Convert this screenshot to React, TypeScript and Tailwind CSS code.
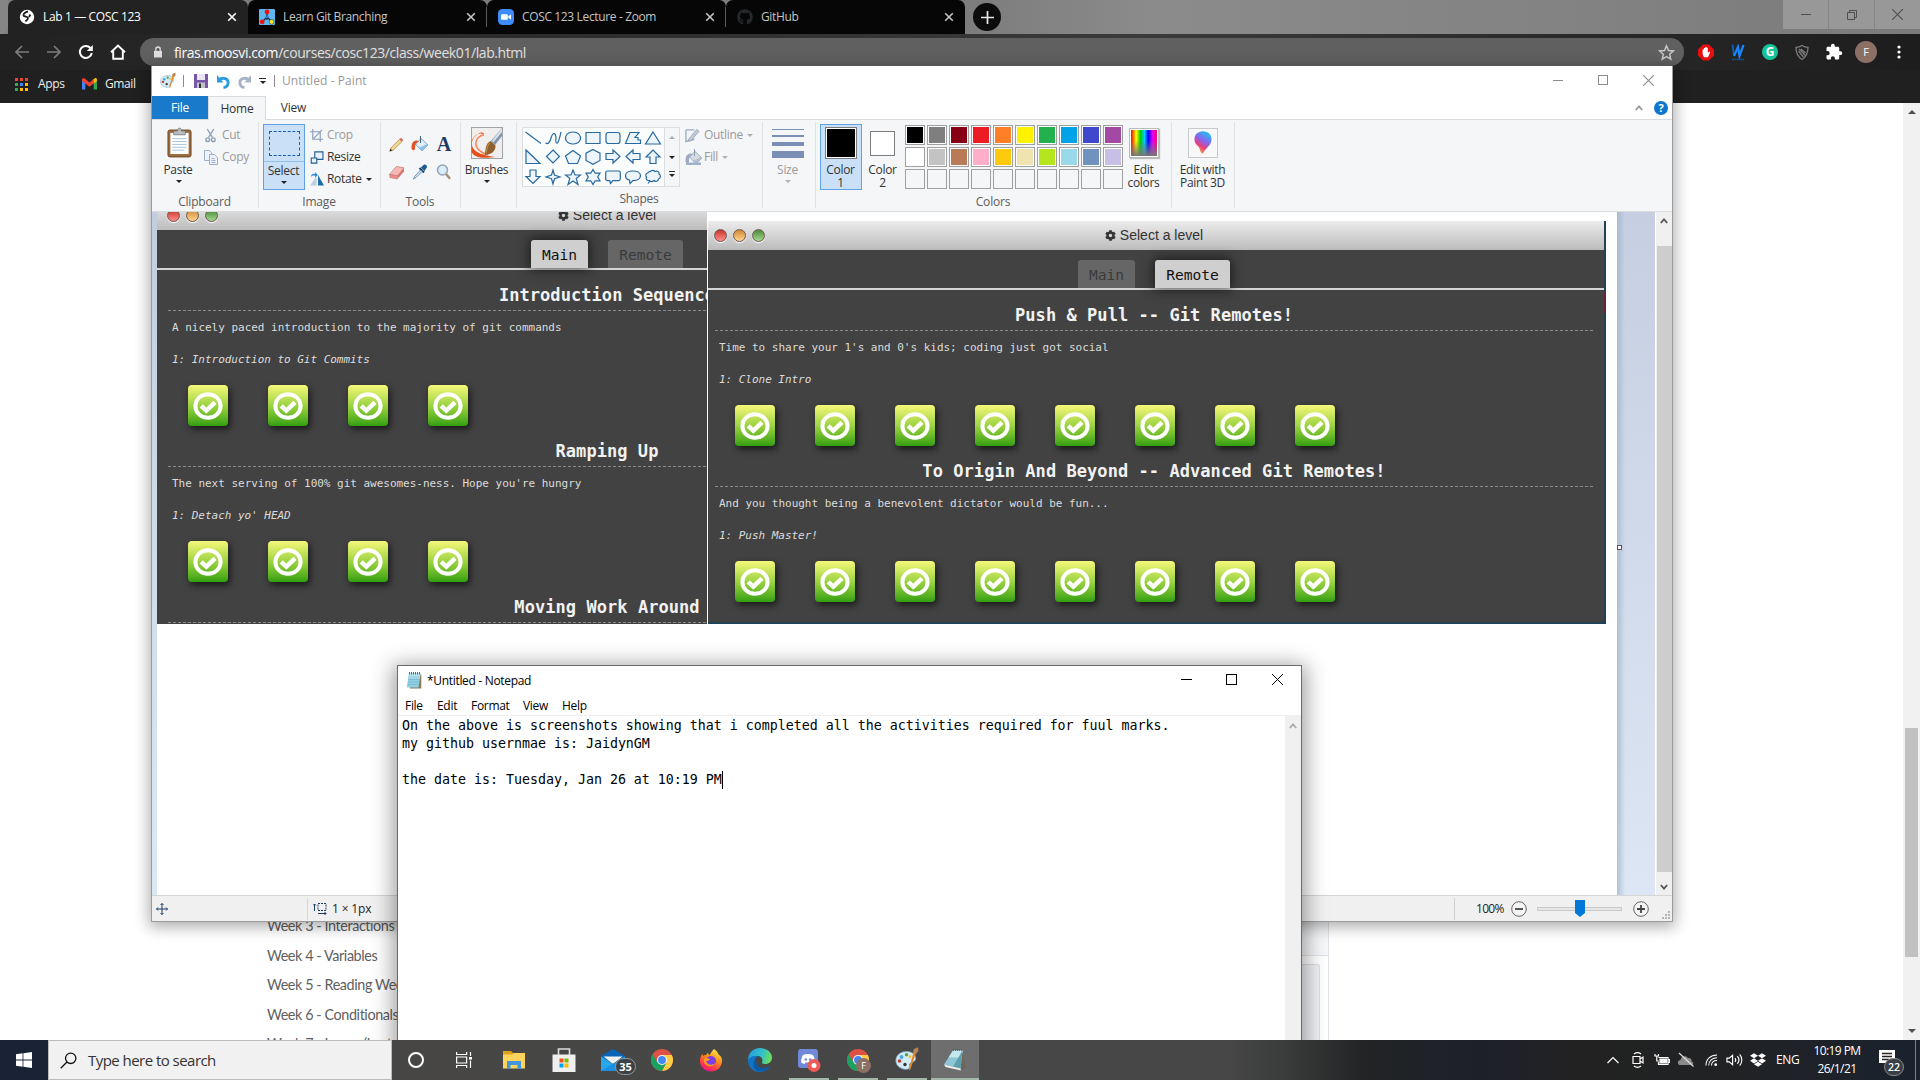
import React from "react";
import { FaGithub, FaCog, FaDropbox } from "react-icons/fa";
import { MdExtension } from "react-icons/md";

const UI = "font-['Open_Sans','Noto_Sans',sans-serif]";

/* ---------- Browser ---------- */

function Cross({ className = "" }: { className?: string }) {
  return (
    <svg viewBox="0 0 10 10" className={`h-[10px] w-[10px] shrink-0 ${className}`} fill="none" stroke="currentColor" strokeWidth="1.6">
      <path d="M1.2 1.2 8.8 8.8M8.8 1.2 1.2 8.8" />
    </svg>
  );
}

function GlobeIcon() {
  return (
    <svg viewBox="0 0 16 16" className="h-4 w-4">
      <circle cx="8" cy="8" r="7.2" fill="#fff" />
      <path d="M9 2.500C6.500 3 4 4.500 4.500 6.500c.8 1.500 4 .8 4.500 2.500.3 1.500-1.500 2-2.500 3.500M11.500 5.500 10 8" fill="none" stroke="#222" strokeWidth="1.800" />
    </svg>
  );
}

function GitTreeIcon() {
  return (
    <svg viewBox="0 0 16 16" className="h-4 w-4">
      <rect width="16" height="16" rx="1" fill="#5cb8ee" />
      <path d="M8 4v4M8 8 3.5 12.5M8 8l4.5 4.5M8 6v5" stroke="#123" strokeWidth="1.2" />
      <circle cx="8" cy="3" r="2.4" fill="#e11" />
      <circle cx="3.2" cy="12.8" r="2.4" fill="#e11" />
      <circle cx="12.6" cy="12.8" r="2.4" fill="#f6e82a" stroke="#222" strokeWidth=".5" />
      <circle cx="8" cy="8" r="1.6" fill="#3a6fd0" />
    </svg>
  );
}

function ZoomIcon() {
  return (
    <svg viewBox="0 0 16 16" className="h-4 w-4">
      <rect width="16" height="16" rx="4.5" fill="#3f8cff" />
      <rect x="3" y="5.2" width="6.8" height="5.6" rx="1.2" fill="#fff" />
      <path d="M10.3 7.3 13 5.4v5.2l-2.7-1.9z" fill="#fff" />
    </svg>
  );
}

function Tab({ icon, title, active = false, width, divider = false }: { icon: React.ReactNode; title: string; active?: boolean; width: string; divider?: boolean }) {
  return (
    <div className={`flex h-[34px] items-center rounded-t-[7px] ${width} ${active ? "bg-[#222] text-white" : "bg-[#060606] text-[#c4c4c4]"}`}>
      <div className="flex w-[35px] items-center justify-center pl-[3px]">{icon}</div>
      <span className="flex-1 whitespace-nowrap text-[12px] leading-[16px] tracking-[-0.36px]">{title}</span>
      <Cross className="mr-[10px]" />
      <div className={`h-[20px] w-px ${divider ? "bg-[#5a5a5a]" : "bg-transparent"}`} />
    </div>
  );
}

function Chrome() {
  return (
    <div className="relative h-[103px] w-full overflow-hidden bg-[#202020]">
      <div className="flex h-[34px] bg-gradient-to-r from-[#7c7c7c] from-50% via-[#8b8b8b] via-60% to-[#7b7b7b]">
        <div className="w-[8px] shrink-0 rounded-br-[6px] bg-[#858585]" />
        <Tab width="w-[240px]" active icon={<GlobeIcon />} title="Lab 1 — COSC 123" />
        <Tab width="w-[239px]" divider icon={<GitTreeIcon />} title="Learn Git Branching" />
        <Tab width="w-[239px]" divider icon={<ZoomIcon />} title="COSC 123 Lecture - Zoom" />
        <Tab width="w-[239px]" icon={<FaGithub className="h-4 w-4 text-[#24292e]" />} title="GitHub" />
        <div className="ml-[8px] mt-[3px] flex h-[28px] w-[28px] items-center justify-center rounded-full bg-[#0c0c0c]">
          <svg viewBox="0 0 12 12" className="h-[13px] w-[13px]" stroke="#e8e8e8" strokeWidth="1.6"><path d="M6 0v12M0 6h12" /></svg>
        </div>
        <div className="flex-1" />
        <div className="flex h-[29px] gap-px bg-[#868686] text-[#4f4f4f]">
          <div className="flex w-[45px] items-center justify-center bg-[#989898]"><div className="h-px w-[10px] bg-current" /></div>
          <div className="flex w-[45px] items-center justify-center bg-[#989898]">
            <svg viewBox="0 0 10 10" className="h-[10px] w-[10px]" fill="none" stroke="currentColor"><path d="M.5 2.5h7v7h-7zM2.5 2.5v-2h7v7h-2" /></svg>
          </div>
          <div className="flex w-[45px] items-center justify-center bg-[#989898]">
            <svg viewBox="0 0 10 10" className="h-[11px] w-[11px]" fill="none" stroke="currentColor"><path d="M0 0 10 10M10 0 0 10" /></svg>
          </div>
        </div>
      </div>
      <div className="flex h-[36px] items-center bg-gradient-to-r from-[#222] via-[#3a3a3a] via-60% to-[#1d1d1d]">
        <div className="flex w-[140px] items-center gap-[16px] pl-[14px]">
          <svg viewBox="0 0 16 16" className="h-4 w-4 shrink-0" fill="none" stroke="#7d7d7d" strokeWidth="1.7"><path d="M15 8H2M8 2 2 8l6 6" /></svg>
          <svg viewBox="0 0 16 16" className="h-4 w-4 shrink-0" fill="none" stroke="#7d7d7d" strokeWidth="1.7"><path d="M1 8h13M8 2l6 6-6 6" /></svg>
          <svg viewBox="0 0 16 16" className="h-4 w-4 shrink-0" fill="none" stroke="#fff" strokeWidth="2"><path d="M13.8 9A6 6 0 1 1 12.4 4" /><path d="M14.8 1v6H8.8z" fill="#fff" stroke="none" /></svg>
          <svg viewBox="0 0 16 16" className="h-4 w-4 shrink-0" fill="none" stroke="#fff" strokeWidth="1.9"><path d="M1 8.2 8 1.5l7 6.7M3.2 7v7.8h9.6V7" /></svg>
        </div>
        <div className="flex h-[28px] w-[1544px] items-center rounded-full bg-[#606060] pl-[13px] pr-[9px]">
          <svg viewBox="0 0 10 12" className="h-[12px] w-[10px]"><path d="M1 5h8v6.5H1z" fill="#e0e0e0" /><path d="M2.8 5V3.2a2.2 2.2 0 0 1 4.4 0V5" fill="none" stroke="#e0e0e0" strokeWidth="1.3" /></svg>
          <span className="ml-[11px] flex-1 text-[14px] tracking-[-0.42px] text-[#e2e2e2]"><span className="text-white">firas.moosvi.com</span>/courses/cosc123/class/week01/lab.html</span>
          <svg viewBox="0 0 24 24" className="h-[17px] w-[17px]" fill="none" stroke="#c8c8c8" strokeWidth="2"><path d="m12 2.5 2.8 6.7 7 .6-5.3 4.7 1.6 7L12 17.8l-6.1 3.7 1.6-7L2.2 9.800l7-.6z" /></svg>
        </div>
        <div className="ml-[14px] flex items-center">
          <svg viewBox="0 0 16 16" className="mr-[16px] h-[17px] w-[16px]"><path d="M5 0h6l5 5v6l-5 5H5l-5-5V5z" fill="#e60f0f" /><path d="M4.6 8V5h1.300v2.500-4h1.300v3.500-4.500h1.300v4.500-3.800h1.300v5l1.600-1.200.8.8L10 12.800H6.500C5.200 12 4.600 10.500 4.600 8z" fill="#fff" /></svg>
          <svg viewBox="0 0 16 17" className="mr-[16px] h-[17px] w-[16px]" fill="none"><path d="M2.500.5 4 12" stroke="#0f5fc0" strokeWidth="1.800" /><path d="M4 12 8 3l1.500 9L13.500 1" stroke="#1a86ff" strokeWidth="2.200" /><path d="M2 15.500h12" stroke="#0d4f92" strokeDasharray="2 .6" strokeWidth="1.500" /></svg>
          <span className="mr-[16px] flex h-[16px] w-[16px] items-center justify-center rounded-full bg-[#15c39a] text-[12px] font-bold text-white">G</span>
          <svg viewBox="0 0 16 16" className="mr-[15px] h-[17px] w-[16px]" fill="none" stroke="#7c7c7c" strokeWidth="1.3"><path d="M8 1c2 1.300 4 1.800 6 1.800 0 6-1.500 9.500-6 12.200C3.500 12.300 2 8.800 2 2.800 4 2.800 6 2.300 8 1z" /><path d="M5 4.500 11.500 11M4.500 6.500l5 6M7 4.500l4.500 4" /></svg>
          <MdExtension className="mr-[12px] h-[18px] w-[18px] text-white" />
          <span className="mr-[20px] flex h-[22px] w-[22px] items-center justify-center rounded-full bg-[#8c7066] text-[11px] text-white">F</span>
          <svg viewBox="0 0 4 14" className="h-[14px] w-[4px]" fill="#fff"><circle cx="2" cy="2" r="1.600" /><circle cx="2" cy="7" r="1.600" /><circle cx="2" cy="12" r="1.600" /></svg>
        </div>
      </div>
      <div className="flex h-[33px] items-center pb-[5px] pl-[15px] text-[12px] text-[#eee]">
        <div className="grid grid-cols-3 gap-[2px]">
          {["bg-[#ea4335]", "bg-[#ea4335]", "bg-[#ea4335]", "bg-[#34a853]", "bg-[#4285f4]", "bg-[#fbbc05]", "bg-[#34a853]", "bg-[#fbbc05]", "bg-[#fbbc05]"].map((c, i) => (
            <div key={i} className={`h-[3px] w-[3px] ${c}`} />
          ))}
        </div>
        <span className="ml-[10px] w-[44px] tracking-[-0.3px]">Apps</span>
        <svg viewBox="0 0 15 12" className="h-[12px] w-[15px]"><path d="M0 1.500v10h3.300V5z" fill="#4285f4" /><path d="M15 1.500v10h-3.300V5z" fill="#34a853" /><path d="M0 1.500C0 0 1.800-.2 2.800.6L7.500 4.400 12.200.6v4.500L7.500 8.800 0 3z" fill="#ea4335" /><path d="M11.700 1 13 .2c1-.4 2 .3 2 1.500V3l-3.300 2.500z" fill="#fbbc05" /></svg>
        <span className="ml-[8px] tracking-[-0.4px]">Gmail</span>
      </div>
    </div>
  );
}

function CoursePage() {
  return (
    <div className="flex h-[937px] w-full bg-white">
      <div className="flex w-[1301px] flex-col pl-[267px] pt-[808px] font-['Lato',sans-serif] text-[14.4px] leading-[29.5px] tracking-[-0.42px] text-[#5f5f5f]">
        {["Week 3 - Interactions", "Week 4 - Variables", "Week 5 - Reading Week", "Week 6 - Conditionals", "Week 7 - Loops (Lecture) Video"].map((t) => (
          <div key={t} className="h-[29.6px] shrink-0 whitespace-nowrap">{t}</div>
        ))}
      </div>
      <div className="flex w-[28px] flex-col border-r border-[#dfe2e6] pt-[807px]">
        <div className="h-[46px] shrink-0 border-b border-[#dfe2e6] bg-[#f6f7f9]" />
        <div className="mr-[8px] mt-[8px] flex-1 rounded-tr-[3px] border-r border-t border-[#dcdfe3] bg-[#f1f2f5]" />
      </div>
      <div className="flex-1" />
      <div className="flex w-[17px] flex-col items-center bg-[#f1f1f1]">
        <div className="mt-[7px] h-0 w-0 border-x-[4px] border-b-[4px] border-x-transparent border-b-[#505050]" />
        <div className="mt-[614px] h-[229px] w-[13px] bg-[#c1c1c1]" />
        <div className="mt-[72px] h-0 w-0 border-x-[4px] border-t-[4px] border-x-transparent border-t-[#505050]" />
      </div>
    </div>
  );
}

/* ---------- Git level panels pasted on the canvas ---------- */

function CheckTile() {
  return (
    <div className="flex h-[41px] w-[40px] items-center justify-center rounded-[4px] bg-gradient-to-b from-[#f6f878] via-[#93cf3c] via-55% to-[#2f9f10] shadow-[2px_3px_7px_rgba(0,0,0,0.65)]">
      <svg viewBox="0 0 30 28" className="h-[28px] w-[30px]" fill="none" stroke="#fff">
        <ellipse cx="15" cy="14" rx="12.600" ry="11.800" strokeWidth="4" />
        <path d="M8.200 13.800 13.300 18.700 22 10.300" strokeWidth="4.400" />
      </svg>
    </div>
  );
}

function Light({ color }: { color: string }) {
  return <div className={`h-[13px] w-[13px] rounded-full border border-[#6d5a55] shadow-[0_1px_1px_#fff] ${color}`} />;
}

type Section = { title: string; text?: string; level?: string };

function LevelPanel({ active, sections, count }: { active: "Main" | "Remote"; sections: Section[]; count: number }) {
  return (
    <div className="w-[900px] shrink-0 bg-[#424242] font-['DejaVu_Sans_Mono',monospace]">
      <div className="flex h-[29px] items-center bg-gradient-to-b from-[#ececec] to-[#bcbcbc] font-['Liberation_Sans',Arial,sans-serif] text-[14px] text-[#333]">
        <div className="flex w-[76px] gap-[6px] pl-[10px]">
          <Light color="bg-gradient-to-b from-[#c9302c] to-[#ff8c87]" />
          <Light color="bg-gradient-to-b from-[#d08a30] to-[#ffd38c]" />
          <Light color="bg-gradient-to-b from-[#4c8b36] to-[#a3d88f]" />
        </div>
        <div className="flex flex-1 items-center justify-center gap-[4px] pr-[76px]">
          <FaCog className="h-[11px] w-[11px]" />
          <span>Select a level</span>
        </div>
      </div>
      <div className="flex h-[40px] items-end justify-center gap-[20px] border-b-2 border-[#d2d5d3] text-[14.6px]">
        {(["Main", "Remote"] as const).map((t) => (
          <div key={t} className={`flex h-[28px] items-center justify-center rounded-t-[3px] pt-[2px] ${t === "Main" ? "w-[57px]" : "w-[75px]"} ${t === active ? "bg-[#cfcfcf] text-[#111] shadow-[0_0_12px_2px_rgba(0,0,0,0.55)]" : "bg-[#666] text-[#3a3a3a]"}`}>{t}</div>
        ))}
      </div>
      {sections.map((s) => (
        <div key={s.title} className="h-[156px] pt-[10px]">
          <div className="mx-[11px] flex h-[31px] items-center justify-center border-b border-dashed border-[#8a8a8a] pt-[2px] text-[17px] font-bold tracking-[0.06px] text-[#f2f2f2]">{s.title}</div>
          {s.text && (
            <>
              <div className="flex h-[32px] items-center pl-[15px] pt-[2px] text-[11px] tracking-[-0.02px] text-[#dcdcdc]">{s.text}</div>
              <div className="flex h-[32px] items-center pl-[15px] pt-[2px] text-[11px] italic tracking-[-0.03px] text-[#dcdcdc]">{s.level}</div>
              <div className="flex gap-[40px] pl-[31px] pt-[10px]">
                {Array.from({ length: count }, (_, i) => <CheckTile key={i} />)}
              </div>
            </>
          )}
        </div>
      ))}
    </div>
  );
}

/* ---------- Paint ---------- */

function Down({ dim = false }: { dim?: boolean }) {
  return <div className={`h-0 w-0 shrink-0 border-x-[3px] border-t-[3px] border-x-transparent ${dim ? "border-t-[#b0b0b0]" : "border-t-[#222]"}`} />;
}

function Group({ label, width, children }: { label: string; width: string; children: React.ReactNode }) {
  return (
    <div className={`mt-[2px] flex h-[86px] shrink-0 flex-col border-r border-[#e0e2e4] ${width}`}>
      <div className="flex h-[70px] pt-[2px]">{children}</div>
      <div className="pr-[1px] pt-[2px] text-center text-[12px] leading-[19px] tracking-[-0.2px] text-[#5c5c5c]">{label}</div>
    </div>
  );
}

function BigButton({ icon, label, arrow, second, className }: { icon: React.ReactNode; label: string; arrow?: "on" | "dim"; second?: string; className: string }) {
  return (
    <div className={`flex h-[66px] shrink-0 flex-col items-center ${className}`}>
      <div className="flex h-[37px] items-center justify-center">{icon}</div>
      <div className="mt-[2px] whitespace-nowrap pr-[1px] text-[12px] leading-[13px] tracking-[-0.3px]">{label}</div>
      {second && <div className="whitespace-nowrap pr-[1px] text-[12px] leading-[13px] tracking-[-0.3px]">{second}</div>}
      {arrow && <div className="mt-[4px]"><Down dim={arrow === "dim"} /></div>}
    </div>
  );
}

function Row({ icon, label, dim = false, arrow = false }: { icon: React.ReactNode; label: string; dim?: boolean; arrow?: boolean }) {
  return (
    <div className={`flex h-[22px] items-center text-[12px] tracking-[-0.3px] ${dim ? "text-[#9a9a9a]" : "text-[#333]"}`}>
      <div className="flex w-[19px] items-center">{icon}</div>
      <span>{label}</span>
      {arrow && <div className="ml-[4px]"><Down dim={dim} /></div>}
    </div>
  );
}

const shapes = [
  "M1.500 3 17 14.500",
  "M1.500 14C4 16 6 13 7 9s3-6 4.500-3-1 7 1 8S16 7 17 3",
  "M9 3a7.500 6 0 1 0 .01 0z",
  "M2 3.500h14v11H2z",
  "M4.500 3.500h9a2.500 2.500 0 0 1 2.500 2.500v6a2.500 2.500 0 0 1-2.500 2.500h-9A2.500 2.500 0 0 1 2 12V6a2.500 2.500 0 0 1 2.500-2.500z",
  "M1.500 14.500 6 3.500h9l-4 5h3v2.500h2.500v3.500z",
  "M9 3 16.500 15h-15z",
  "M2 2v13.500h14z",
  "M9 2l6.500 6.500L9 15 2.500 8.500z",
  "M9 2.500l7.500 5.500L13.500 15.500h-9L1.500 8z",
  "M9 1.500l7 3.700v7.300l-7 3.700-7-3.700V5.200z",
  "M2 5.500h7V2l7 6.500-7 6.500v-3.500H2z",
  "M16 5.500H9V2L2 8.500l7 6.500v-3.500h7z",
  "M6 15.500V9H2l7-7 7 7h-4v6.500z",
  "M6 2v6.500H2l7 7 7-7h-4V2z",
  "M9 2l1.500 5L16 9l-5.500 1.800L9 16l-1.500-5.200L2 9l5.500-2z",
  "M9 2l2 5h5.500l-4.300 3.500L14 16.500 9 13 4 16.500l1.800-6L1.500 7H7z",
  "M9 1.500l2.200 3.700h4.800L13.700 9l2.300 3.800h-4.800L9 16.500l-2.200-3.700H2L4.300 9 2 5.200h4.800z",
  "M3.500 3h11a1.800 1.800 0 0 1 1.800 1.800v6a1.800 1.800 0 0 1-1.800 1.800H9L6.500 15.500l-.8-2.900H3.500a1.800 1.800 0 0 1-1.800-1.800v-6A1.800 1.800 0 0 1 3.500 3z",
  "M9 3c4.500 0 7.500 2 7.500 4.800S13.500 12.600 9 12.600L6 15.500l-.5-3.300C3 11.500 1.500 9.800 1.500 7.800 1.500 5 4.500 3 9 3z",
  "M6 3.800c1.200-2 4-1.800 5-.3 2-1 4.500.3 4 2.500 2 1 2 4-.5 5 0 2.500-3 3-4.500 1.500-1.500 1.500-4 1.300-4.500 0-2.500.5-4-1.500-3-3.500-1.500-1.500-.5-4 1.300-4C4 4 5 3.500 6 3.800zM6 13l-2 2.500",
];

const palette = [
  ["bg-[#000000]", "bg-[#7f7f7f]", "bg-[#880015]", "bg-[#ed1c24]", "bg-[#ff7f27]", "bg-[#fff200]", "bg-[#22b14c]", "bg-[#00a2e8]", "bg-[#3f48cc]", "bg-[#a349a4]"],
  ["bg-[#ffffff]", "bg-[#c3c3c3]", "bg-[#b97a57]", "bg-[#ffaec9]", "bg-[#ffc90e]", "bg-[#efe4b0]", "bg-[#b5e61d]", "bg-[#99d9ea]", "bg-[#7092be]", "bg-[#c8bfe7]"],
];

function PaletteGlyph({ className }: { className: string }) {
  return (
    <svg viewBox="0 0 24 24" className={className}>
      <path d="M1 15C0 9 5 4.500 11.500 4.500s10 4 9 8c-.8 3-4 2-5.500 4s1 3-1 5S2 22 1 15z" fill="#d3eaf7" stroke="#7ea8c4" strokeWidth=".8" />
      <circle cx="6.500" cy="10" r="1.900" fill="#4aa5e0" /><circle cx="11.500" cy="7.800" r="1.700" fill="#48a43f" /><circle cx="4.500" cy="14" r="1.800" fill="#c0392b" /><circle cx="10" cy="17.500" r="1.700" fill="#333" /><circle cx="15" cy="9.500" r="1.500" fill="#e9c53a" />
      <path d="M21 6 15.500 22l-1.500 1.500.3-2.500L18.500 5z" fill="#e58a2c" /><path d="M18.500 5.500C17.500 3 19 1 23 .5c1 2.500 0 5-2 6.300z" fill="#b98252" />
    </svg>
  );
}

function Bucket({ dim = false }: { dim?: boolean }) {
  return (
    <svg viewBox="0 0 18 16" className="h-[16px] w-[18px]">
      <path d="M10 2.500 17 9 11 15 4.500 8z" fill={dim ? "#d6dbe4" : "#e2eff8"} stroke={dim ? "#a3aec0" : "#7ba6c8"} />
      <path d="M17 9 11 15 8 11.800 16 8z" fill={dim ? "#b5bfd0" : "#8fc3e6"} />
      <path d="M9.500 0v7" stroke={dim ? "#8f9bb0" : "#4a6076"} />
      <path d="M.5 12.500C.5 6.500 2.500 4.500 6 4.500l2 1C5 6.500 4 8.500 4 13c-1 2-2.500 1.500-3.500-.5z" fill={dim ? "#9fabc0" : "#e0542a"} />
      {dim && <path d="M1 13.500h15V16H1z" fill="#9fb0cb" />}
    </svg>
  );
}

function Ribbon() {
  return (
    <div className="flex h-[93px] border-b border-t border-[#dadbdc] bg-[#f5f6f7] text-[#333]">
      <Group label="Clipboard" width="w-[107px]">
        <BigButton className="ml-[7px] w-[39px]" label="Paste" arrow="on" icon={
          <svg viewBox="0 0 26 32" className="ml-[1px] h-[31px] w-[25px]"><rect x="1" y="3" width="24" height="28" rx="2" fill="#9a6a3c" stroke="#6f4a26" /><rect x="3.500" y="6" width="19" height="22" fill="#fff" /><path d="M5.500 12h15M5.500 15h15M5.500 18h15M5.500 21h15M5.500 24h12" stroke="#a9c3d8" /><path d="M7 4h4c0-4 4-4 4 0h4v4H7z" fill="#b9bdc2" stroke="#6c7075" strokeWidth=".8" /></svg>
        } />
        <div className="ml-[5px] flex flex-col">
          <Row dim label="Cut" icon={<svg viewBox="0 0 14 16" className="ml-[1px] h-[15px] w-[13px]" fill="none" stroke="#8fa1bb" strokeWidth="1.500"><path d="M3.500 1 9 10M10.500 1 5 10" /><circle cx="4" cy="12.500" r="2" /><circle cx="10" cy="12.500" r="2" /></svg>} />
          <Row dim label="Copy" icon={<svg viewBox="0 0 16 16" className="h-[16px] w-[16px]" fill="#eef2f8" stroke="#9db0cc"><path d="M1.500 1.500h5l2 2v8h-7z" /><path d="M6.500 5.500h5l3 3v7h-8zM8.500 9.500h3M8.500 11.500h4M8.500 13.500h4" /></svg>} />
        </div>
      </Group>
      <Group label="Image" width="w-[122px]">
        <BigButton className="ml-[4px] w-[42px] border border-[#62a2e4] bg-[#c9e0f7]" label="Select" arrow="on" icon={
          <div className="flex h-full w-[40px] items-center justify-center border-b border-[#92bfec]"><div className="h-[25px] w-[31px] border border-dashed border-[#1a5fa5]" /></div>
        } />
        <div className="ml-[5px] flex flex-col [&>div>div:first-child]:w-[17px]">
          <Row dim label="Crop" icon={<svg viewBox="0 0 14 14" className="h-[13px] w-[13px]" fill="none" stroke="#8a9cb8" strokeWidth="1.200"><path d="M3 0v11h11M0 3h11v11M4 10 13 1" /></svg>} />
          <Row label="Resize" icon={<svg viewBox="0 0 14 14" className="h-[13px] w-[14px]" fill="#eaf3fb" stroke="#1f6091" strokeWidth="1.200"><path d="M4.600 1h8.800v8H4.600z" /><path d="M.8 7.500h6v5.500h-6z" /></svg>} />
          <Row arrow label="Rotate" icon={<svg viewBox="0 0 14 14" className="h-[14px] w-[14px]"><path d="M6.500 4v9.500H0z" fill="#b9cfe2" /><path d="M8 3v10.500h6z" fill="#1f6ca8" /><path d="M1 5C1 2 3 1.500 5 2V.3L8 3 5 5.500V3.800C3.500 3.300 2.500 3.500 1 5z" fill="#2d8fdc" /></svg>} />
        </div>
      </Group>
      <Group label="Tools" width="w-[80px]">
        <div className="grid h-[66px] w-full grid-cols-[24px_24px_24px] grid-rows-[28px_28px] place-items-center pl-[3px] pt-[6px]">
          <svg viewBox="0 0 16 16" className="h-[15px] w-[15px]"><path d="M1 15 2 11.800 11.300 2.300l2.600 2.500L4.500 14z" fill="#f3d98f" stroke="#a5854a" strokeWidth=".8" /><path d="M11 2.500 12.800.8 15.300 3.300l-1.600 1.800z" fill="#d4696a" /><path d="M.5 15.500l.9-3L3.800 14.500z" fill="#333" /></svg>
          <Bucket />
          <span className="font-['Liberation_Serif',serif] text-[20px] font-bold leading-none text-[#1f3b63]">A</span>
          <svg viewBox="0 0 18 16" className="h-[15px] w-[17px]"><path d="M1.500 10 9 1.500 17 3l-7 8.500z" fill="#f6b9b5" stroke="#b9746b" strokeWidth=".7" /><path d="M1.500 10l8.500 1.500V15L2 13.500z" fill="#ea9088" stroke="#b9746b" strokeWidth=".5" /><path d="M10 11.500 17 3v4l-7 8z" fill="#d87770" /></svg>
          <svg viewBox="0 0 16 16" className="h-[16px] w-[16px]"><path d="M9 3.500 11.500 1c2-1.500 4.500 1 3 3L12.500 7z" fill="#1f5a94" /><path d="M7.500 4 12 8.500" stroke="#173f68" strokeWidth="2" /><path d="M8.500 6 10 7.500 4 13.500l-2.500 1.500L2.500 12.500z" fill="#d6e8f5" stroke="#5e8bb0" strokeWidth=".9" /></svg>
          <svg viewBox="0 0 16 16" className="h-[16px] w-[16px]" fill="#dcecf8"><circle cx="6.500" cy="6" r="5" stroke="#8fa5b8" strokeWidth="1.500" /><path d="M10 10l4 4.800" stroke="#a98c70" strokeWidth="2.400" /></svg>
        </div>
      </Group>
      <Group label="" width="w-[56px]">
        <BigButton className="ml-[4px] w-[44px]" label="Brushes" arrow="on" icon={
          <svg viewBox="0 0 32 32" className="mt-[1px] h-[32px] w-[32px]">
            <rect x=".5" y=".5" width="31" height="31" fill="#f1efee" stroke="#a0a4a8" />
            <path d="M13 8c0-3-3-3-6-1-5 3-8 9-5 14 3 5 10 7 22 9-14 2-21 0-23.500-5V14C3 8 9 4 13 8z" fill="#e2521f" />
            <path d="M13 8C9 8 4 12 5 18c1 5 6 8 12 10" fill="none" stroke="#f4875a" strokeWidth="1.500" />
            <path d="M31 1v8L24 18l-4-4z" fill="#7f95a8" /><path d="M31 1 21 14l1.500 1.300L31 5z" fill="#d8e3ec" />
            <path d="M19.500 14l5 4.500c.5 6-5 9.500-11 9 1.500-4 .5-11 6-13.500z" fill="#91602f" /><path d="M19 16c-3 2-3 7-4 10" fill="none" stroke="#c08a4e" strokeWidth="1.200" />
          </svg>
        } />
      </Group>
      <Group label="Shapes" width="w-[246px]">
        <div className="ml-[5px] mt-[3px] flex h-[60px] w-[158px] border border-[#dcdddf] bg-[#fbfcfc]">
          <div className="grid grid-cols-7 grid-rows-3">
            {shapes.map((d, i) => (
              <svg key={i} viewBox="0 0 18 18" className="m-px h-[18px] w-[18px]" fill={i < 2 ? "none" : "#eef5fa"} stroke="#2769a0" strokeWidth="1.200"><path d={d} /></svg>
            ))}
          </div>
          <div className="ml-[1px] flex w-[15px] flex-col items-center border-l border-[#dcdddf] bg-[#f5f6f7]">
            <div className="mt-[8px] h-0 w-0 border-x-[3px] border-b-[3px] border-x-transparent border-b-[#aaa]" />
            <div className="mb-[12px] mt-[17px]"><Down /></div>
            <div className="mb-[2px] h-px w-[6px] shrink-0 bg-[#333]" />
            <Down />
          </div>
        </div>
        <div className="ml-[5px] flex flex-col">
          <Row dim arrow label="Outline" icon={<svg viewBox="0 0 16 16" className="h-[15px] w-[15px]"><path d="M1 2h9v0M1 2v12.500L10 12" fill="none" stroke="#9aa9c2" strokeWidth="1.400" /><path d="M3 13 12.500 1.500 15 3.500 6 14z" fill="#c0c9d8" stroke="#8f9db5" strokeWidth=".8" /></svg>} />
          <Row dim arrow label="Fill" icon={<Bucket dim />} />
        </div>
      </Group>
      <Group label="" width="w-[53px]">
        <BigButton className="ml-[4px] w-[42px] text-[#9a9a9a]" label="Size" arrow="dim" icon={
          <div className="flex flex-col gap-[5px] pt-[1px]"><div className="h-px w-[32px] bg-[#7a8fb3]" /><div className="h-[2px] w-[32px] bg-[#7a8fb3]" /><div className="h-[4px] w-[32px] bg-[#7a8fb3]" /><div className="h-[7px] w-[32px] bg-[#7a8fb3]" /></div>
        } />
      </Group>
      <Group label="Colors" width="w-[356px]">
        <BigButton className="ml-[4px] w-[42px] border border-[#62a2e4] bg-[#c9e0f7]" label="Color" second="1" icon={
          <div className="h-[32px] w-[32px] border border-[#7a7a7a] bg-white p-px"><div className="h-full w-full bg-black" /></div>
        } />
        <BigButton className="w-[42px]" label="Color" second="2" icon={<div className="mr-px mt-[1px] h-[25px] w-[25px] border border-[#7d7d7d] bg-white" />} />
        <div className="ml-[1px] mt-[1px] grid auto-rows-[20px] grid-cols-[repeat(10,20px)] gap-[2px]">
          {palette.flat().map((c) => (
            <div key={c} className="border border-[#a0a0a0] bg-white p-px"><div className={`h-full w-full ${c}`} /></div>
          ))}
          {Array.from({ length: 10 }, (_, i) => <div key={i} className="border border-[#a0a0a0] bg-[#f5f6f7]" />)}
        </div>
        <BigButton className="ml-0 w-[42px]" label="Edit" second="colors" icon={
          <div className="mt-[1px] h-[30px] w-[30px] border border-[#bbb] bg-white p-px shadow-[1px_1px_1px_#bbb]">
            <div className="h-full w-full bg-[linear-gradient(90deg,#f00,#ff0_20%,#0c0_36%,#0cf_52%,#00f_66%,#d0f_82%,#f06)]"><div className="h-full w-full bg-gradient-to-b from-transparent from-40% to-[#777]" /></div>
          </div>
        } />
      </Group>
      <Group label="" width="w-[63px]">
        <BigButton className="ml-[1px] w-[60px]" label="Edit with" second="Paint 3D" icon={
          <div className="mt-[1px] flex h-[30px] w-[30px] items-center justify-center border border-[#c9c9c9] bg-[#f8f8f8]">
            <svg viewBox="0 0 20 26" className="h-[24px] w-[18px]">
              <defs><linearGradient id="drop" x1=".8" y1="0" x2=".3" y2="1"><stop offset="0" stopColor="#15c8f0" /><stop offset=".45" stopColor="#8a63f0" /><stop offset=".7" stopColor="#e8407c" /><stop offset="1" stopColor="#f6b13a" /></linearGradient></defs>
              <path d="M10 0c6 0 9.500 4 9.500 9 0 7-8 10-9.500 16C6 24 7.500 19 4 16 2 14 .5 12 .5 9 .5 4 4 0 10 0z" fill="url(#drop)" />
            </svg>
          </div>
        } />
      </Group>
    </div>
  );
}

function PaintTitle() {
  return (
    <div className="flex h-[30px] items-center pl-[8px]">
      <PaletteGlyph className="-mt-[2px] h-[17px] w-[16px]" />
      <div className="ml-[7px] h-[12px] w-px bg-[#8a8a8a]" />
      <svg viewBox="0 0 14 14" className="ml-[10px] h-[14px] w-[14px]"><path d="M0 0h14v14H0z" fill="#7a56a8" /><path d="M3 0h8v6H3z" fill="#e9e6f2" /><path d="M3 8.500h8V14H3z" fill="#bfc3c9" /><path d="M5 9.500h2V14H5z" fill="#333" /></svg>
      <svg viewBox="0 0 14 14" className="ml-[9px] h-[15px] w-[13px]" fill="none"><path d="M2 5c5-3 10-1 10 3 0 3-2 5-5 5.500" stroke="#2c9be0" strokeWidth="3" /><path d="M0 0v8h7z" fill="#2c9be0" /></svg>
      <svg viewBox="0 0 14 14" className="ml-[8px] h-[15px] w-[13px]" fill="none"><path d="M12 5C7 2 2 4 2 8c0 3 2 5 5 5.500" stroke="#a7b3c4" strokeWidth="3" /><path d="M14 0v8H7z" fill="#a7b3c4" /></svg>
      <div className="ml-[8px] flex flex-col items-center gap-[2px]"><div className="h-px w-[7px] bg-[#222]" /><Down /></div>
      <div className="ml-[8px] h-[12px] w-px bg-[#8a8a8a]" />
      <span className="ml-[7px] flex-1 text-[12px] tracking-[0.08px] text-[#999]">Untitled - Paint</span>
      <div className="flex items-center pb-[2px] pr-[18px] text-[#8c8c8c]">
        <div className="h-px w-[10px] bg-current" />
        <div className="ml-[35px] h-[10px] w-[10px] border border-current" />
        <svg viewBox="0 0 10 10" className="ml-[35px] h-[11px] w-[11px]" stroke="currentColor"><path d="M0 0 10 10M10 0 0 10" /></svg>
      </div>
    </div>
  );
}

function Chevron({ down = false, className = "text-[#555]" }: { down?: boolean; className?: string }) {
  return <svg viewBox="0 0 8 6" className={`h-[6px] w-[8px] ${className}`} fill="none" stroke="currentColor" strokeWidth="1.800"><path d={down ? "M.8 1 4 4.600 7.200 1" : "M.8 5 4 1.400 7.200 5"} /></svg>;
}

function Paint() {
  return (
    <div className="absolute left-[151px] top-[66px] flex h-[856px] w-[1522px] flex-col border border-t-0 border-[#9b9b9b] bg-white shadow-[0_3px_14px_2px_rgba(0,0,0,0.32)]">
      <PaintTitle />
      <div className="flex h-[23px] text-[12px] leading-[23px] tracking-[-0.2px]">
        <div className="w-[56px] bg-[#1979ca] text-center text-white">File</div>
        <div className="relative z-10 -mb-px w-[58px] border-x border-t border-[#dadbdc] bg-[#f5f6f7] text-center text-[#333]">Home</div>
        <div className="w-[55px] text-center text-[#333]">View</div>
        <div className="flex flex-1 items-center justify-end gap-[11px] pr-[4px]">
          <Chevron className="text-[#999]" />
          <div className="flex h-[14px] w-[14px] items-center justify-center rounded-full bg-[#0f76cf] text-[11px] font-bold leading-none text-white">?</div>
        </div>
      </div>
      <Ribbon />
      <div className="flex min-h-0 flex-1">
        <div className="w-[5px] bg-gradient-to-b from-[#c2cde0] to-[#dde8f5]" />
        <div className="w-[1460px] overflow-hidden bg-white">
          <div className="flex h-[412px]">
            <div className="flex w-[550px] items-start overflow-hidden bg-[#424242]">
              <div className="-mt-[11px]">
                <LevelPanel active="Main" count={4} sections={[
                  { title: "Introduction Sequence", text: "A nicely paced introduction to the majority of git commands", level: "1: Introduction to Git Commits" },
                  { title: "Ramping Up", text: "The next serving of 100% git awesomes-ness. Hope you're hungry", level: "1: Detach yo' HEAD" },
                  { title: "Moving Work Around" },
                ]} />
              </div>
            </div>
            <div className="flex h-[412px] w-[899px] items-start overflow-hidden border-l border-t-[9px] border-white bg-[#1f4257]">
              <div className="-ml-[4px] h-[401px] overflow-hidden rounded-br-[4px]">
                <LevelPanel active="Remote" count={8} sections={[
                  { title: "Push & Pull -- Git Remotes!", text: "Time to share your 1's and 0's kids; coding just got social", level: "1: Clone Intro" },
                  { title: "To Origin And Beyond -- Advanced Git Remotes!", text: "And you thought being a benevolent dictator would be fun...", level: "1: Push Master!" },
                ]} />
                <div className="h-[20px] bg-[#424242]" />
              </div>
              <div className="mt-[71px] h-[21px] w-[2px] bg-[#6a1f3c]" />
            </div>
          </div>
        </div>
        <div className="flex w-[38px] items-start bg-gradient-to-b from-[#c5cfe1] to-[#dce6f4]">
          <div className="h-full w-[8px] bg-gradient-to-r from-[#9fb0c8]/70 to-transparent" />
          <div className="-ml-[8px] mt-[333px] h-[5px] w-[5px] border border-[#555] bg-white" />
        </div>
        <div className="flex w-[17px] flex-col items-center border-l border-white bg-[#f0f0f0]">
          <div className="flex h-[34px] items-center pb-[16px]"><Chevron /></div>
          <div className="w-[15px] flex-1 bg-[#cdcdcd]" />
          <div className="flex h-[23px] items-center pt-[6px]"><Chevron down /></div>
        </div>
      </div>
      <div className="flex h-[26px] items-center border-t border-[#d5d5d5] bg-[#f0f0f0] text-[12px] text-[#1c1c1c]">
        <div className="flex h-[22px] w-[156px] items-center border-r border-[#d8d8d8] pl-[4px]">
          <svg viewBox="0 0 12 12" className="h-[12px] w-[12px]" fill="none" stroke="#1c3d66"><path d="M6 .5v11M.5 6h11M4.500 2 6 .5 7.500 2M4.500 10 6 11.500 7.500 10M2 4.500.5 6 2 7.500M10 4.500 11.500 6 10 7.500" /></svg>
        </div>
        <svg viewBox="0 0 14 12" className="ml-[5px] h-[12px] w-[14px]" fill="none" stroke="#1c3d66"><path d="M1.500 1v7M0 2.500 1.500 1 3 2.500" /><path d="M5 .5h8v7H5z" strokeDasharray="2 1" /><path d="M5 10.500h8M11.500 9l1.500 1.500-1.500 1.500" /></svg>
        <span className="ml-[5px] flex-1 tracking-[-0.15px]">1 × 1px</span>
        <div className="flex h-[22px] w-[218px] items-center border-l border-[#d0d0d0] pl-[21px]">
          <span className="w-[35px] tracking-[-0.7px]">100%</span>
          <svg viewBox="0 0 16 16" className="h-[16px] w-[16px]"><circle cx="8" cy="8" r="7.300" fill="#f4f4f4" stroke="#666" /><path d="M4 8h8" stroke="#444" strokeWidth="1.800" /></svg>
          <div className="ml-[10px] flex h-[4px] w-[85px] items-center justify-center border border-[#c9c9c9] bg-[#e6e8e8]">
            <svg viewBox="0 0 10 17" className="h-[17px] w-[10px] shrink-0"><path d="M0 0h10v13l-5 4-5-4z" fill="#0078d7" /></svg>
          </div>
          <svg viewBox="0 0 16 16" className="ml-[11px] h-[16px] w-[16px]"><circle cx="8" cy="8" r="7.300" fill="#f4f4f4" stroke="#666" /><path d="M4 8h8M8 4v8" stroke="#444" strokeWidth="1.800" /></svg>
          <svg viewBox="0 0 9 9" className="ml-[13px] mt-[13px] h-[9px] w-[9px]" fill="#b5b5b5"><path d="M6 0h2v2H6zM3 3h2v2H3zM6 3h2v2H6zM0 6h2v2H0zM3 6h2v2H3zM6 6h2v2H6z" /></svg>
        </div>
      </div>
    </div>
  );
}

/* ---------- Notepad ---------- */

function NoteGlyph({ className }: { className: string }) {
  return (
    <svg viewBox="0 0 16 17" className={className}>
      <path d="M13 2.500h2.300V16.500H4v-1.500h8z" fill="#8a7a5c" />
      <path d="M3 1.500h11.500L12.500 15.500H.8z" fill="#8fd0e2" /><path d="M3 1.500h11.500L13.800 6.500H2.200z" fill="#b9e3ee" />
      <path d="M2.500 5h11M2.200 7.500h11M1.800 10h11M1.500 12.500h11" stroke="#6db4c9" strokeWidth=".6" />
      <path d="M3.500 0v2.500M5.500 0v2.500M7.500 0v2.500M9.500 0v2.500M11.500 0v2.500M13.500 0v2.500" stroke="#444" strokeWidth=".8" />
    </svg>
  );
}

function Notepad() {
  return (
    <div className="absolute left-[397px] top-[665px] flex h-[420px] w-[905px] flex-col border border-[#6b6b6b] bg-white shadow-[0_4px_20px_4px_rgba(0,0,0,0.38)]">
      <div className="flex h-[31px] items-center pb-[2px] pl-[8px]">
        <NoteGlyph className="h-[17px] w-[16px]" />
        <span className="ml-[5px] flex-1 text-[12px] tracking-[-0.32px] text-black">*Untitled - Notepad</span>
        <div className="flex items-center pb-[2px] pr-[18px] text-black">
          <div className="h-px w-[11px] bg-current" />
          <div className="ml-[34px] h-[11px] w-[11px] border border-current" />
          <svg viewBox="0 0 11 11" className="ml-[35px] h-[11px] w-[11px]" stroke="currentColor"><path d="M0 0 11 11M11 0 0 11" /></svg>
        </div>
      </div>
      <div className="flex h-[19px] shrink-0 items-center border-b border-[#f0f0f0] pl-[7px] text-[12px] tracking-[-0.3px] text-black">
        <span className="w-[32px]">File</span>
        <span className="w-[34px]">Edit</span>
        <span className="w-[52px]">Format</span>
        <span className="w-[39px]">View</span>
        <span>Help</span>
      </div>
      <div className="flex flex-1">
        <div className="flex-1 whitespace-pre pl-[4px] pt-[1px] font-['DejaVu_Sans_Mono',monospace] text-[13.3px] leading-[18px] tracking-[-0.01px] text-black">
          <div>On the above is screenshots showing that i completed all the activities required for fuul marks.</div>
          <div>my github usernmae is: JaidynGM</div>
          <div className="h-[18px]" />
          <div className="flex">the date is: Tuesday, Jan 26 at 10:19 PM<span className="h-[18px] w-px bg-black" /></div>
        </div>
        <div className="flex w-[16px] justify-center bg-[#f0f0f0] pt-[7px]"><Chevron className="text-[#aaa]" /></div>
      </div>
    </div>
  );
}

/* ---------- Taskbar ---------- */

function ChromeLogo({ className = "h-[22px] w-[22px]" }: { className?: string }) {
  return (
    <svg viewBox="0 0 24 24" className={className}>
      <circle cx="12" cy="12" r="12" fill="#de5246" />
      <path d="M12 6.500h10.700A12 12 0 0 1 12 24l4.800-9.200z" fill="#ffce44" />
      <path d="M7.200 14.700 1.800 5.700A12 12 0 0 0 12 24l4.800-9.200z" fill="#1aa260" />
      <circle cx="12" cy="12" r="5.500" fill="#f4f4f4" /><circle cx="12" cy="12" r="4.300" fill="#4387f4" />
    </svg>
  );
}

function Task({ children, width = "w-[49px]", running = false, active = false }: { children: React.ReactNode; width?: string; running?: boolean; active?: boolean }) {
  return (
    <div className={`relative flex h-[40px] shrink-0 items-center justify-center ${width} ${active ? "bg-[#6e6e6e]" : ""}`}>
      {children}
      {running && <div className={`absolute bottom-0 h-[2px] bg-[#a3b8ab] ${active ? "w-full" : "w-[40px]"}`} />}
    </div>
  );
}

function Taskbar() {
  return (
    <div className="absolute left-0 top-[1040px] flex h-[40px] w-[1920px] overflow-hidden bg-[linear-gradient(90deg,#474645_0%,#474747_64%,#3a3b3b_67%,#222425_71%,#1d2029_77%,#222222_82%,#212224_90%,#1a222e_100%)]">
      <div className="flex w-[48px] items-center justify-center bg-[#1a2236]">
        <svg viewBox="0 0 16 16" className="h-[16px] w-[16px]" fill="#fff"><path d="M0 2.200 6.600 1.300v6.300H0zM7.400 1.200 16 0v7.600H7.400zM0 8.400h6.600v6.300L0 13.800zM7.400 8.400H16V16l-8.600-1.200z" /></svg>
      </div>
      <div className="flex w-[344px] items-center border border-[#bdbdbd] bg-[#f1f1f1] pl-[11px]">
        <svg viewBox="0 0 17 17" className="h-[17px] w-[17px]" fill="none" stroke="#111" strokeWidth="1.300"><circle cx="10.700" cy="6.300" r="5.200" /><path d="M7 10 .7 16.300" /></svg>
        <span className="ml-[11px] text-[15px] tracking-[-0.54px] text-[#333]">Type here to search</span>
      </div>
      <Task width="w-[48px]"><div className="h-[16px] w-[16px] rounded-full border-2 border-white" /></Task>
      <Task width="w-[48px]"><svg viewBox="0 0 16 16" className="h-[16px] w-[16px]" fill="none" stroke="#fff" strokeWidth="1.200"><path d="M.6 0v2.500h10V0M.6 5h10v6H.6zM.6 16v-2.500h10V16M14.500 0v4M14.500 8.500V16" /><path d="M13 5h3v2.500h-3z" fill="#fff" stroke="none" /></svg></Task>
      <Task width="w-[52px]"><svg viewBox="0 0 22 18" className="h-[18px] w-[22px]"><path d="M0 0h8l2 2h12v4H0z" fill="#e0a21c" /><path d="M0 3.500h9l2-1.500h11v15.500H0z" fill="#ffd35c" /><path d="M4 10h14v8h-3.500v-4h-7v4H4z" fill="#4296dc" /></svg></Task>
      <Task width="w-[48px]"><svg viewBox="0 0 24 24" className="-mt-[1px] h-[24px] w-[24px]"><path d="M6.500 7V1h11v6" fill="none" stroke="#ddd" strokeWidth="1.600" /><path d="M.5 6.500h23V24H.5z" fill="#efefef" /><path d="M7.500 10.500h4v4h-4z" fill="#f25022" /><path d="M12.500 10.500h4v4h-4z" fill="#7fba00" /><path d="M7.500 15.500h4v4h-4z" fill="#00a4ef" /><path d="M12.500 15.500h4v4h-4z" fill="#ffb900" /></svg></Task>
      <Task width="w-[50px]">
        <svg viewBox="0 0 24 22" className="h-[22px] w-[24px]"><path d="M0 7 12 0l12 7v5H0z" fill="#0a64b8" /><path d="M2.500 7.500h19L12 15z" fill="#f2f2f2" /><path d="M0 7.500 12 15 24 7.500V22H0z" fill="#2aa6ea" /><path d="M24 7.500V22H0z" fill="#1b8fe0" /></svg>
        <div className="absolute left-[27px] top-[18px] flex h-[17px] w-[21px] items-center justify-center rounded-full border border-[#9a9a9a] bg-[#3a4248] text-[11px] font-bold leading-none text-white">35</div>
      </Task>
      <Task width="w-[48px]"><ChromeLogo /></Task>
      <Task width="w-[49px]">
        <svg viewBox="0 0 24 24" className="h-[24px] w-[24px]">
          <defs><linearGradient id="fox" x1=".8" y1="0" x2=".3" y2="1"><stop offset="0" stopColor="#fff24a" /><stop offset=".45" stopColor="#ff8a16" /><stop offset=".8" stopColor="#ff3350" /><stop offset="1" stopColor="#e31587" /></linearGradient></defs>
          <path d="M15 1c3 2 4 4 4.500 5.500C22 8 23.500 10.500 23 14c-.6 5-5 9.500-11 9.500S1 19 1 13c0-3 1-5.500 2.500-7L4 8c1-.8 2-1.200 3-1L9 4.500c0 1 .5 2 1.500 2.500C12 5 13 3 15 1z" fill="url(#fox)" />
          <circle cx="12" cy="13" r="5" fill="#7b3fe4" /><path d="M6 10c2 0 3 .5 5 1-1 2-3 2-4 2 1 4 6 5 9 2-1 4-9 5-11-1-.3-1.500 0-3 1-4z" fill="#ff9a1f" />
        </svg>
      </Task>
      <Task width="w-[49px]">
        <svg viewBox="0 0 24 24" className="h-[24px] w-[24px]">
          <defs><linearGradient id="edge" x1="0" y1=".2" x2="1" y2=".4"><stop offset="0" stopColor="#1f9de0" /><stop offset=".6" stopColor="#35c1c8" /><stop offset="1" stopColor="#6be05a" /></linearGradient></defs>
          <path d="M12 0c7 0 12 4.500 12 9.500 0 4-3 6.500-6.500 6.500-2.500 0-4-1-3.500-2 1.500-3-.5-6-4.500-6C5 8 1 10 0 13 0 5 5 0 12 0z" fill="url(#edge)" />
          <path d="M0 13C.8 9 5 7.500 9.500 8 6 11 7 19 13 20c4 .7 7-.5 9-2-2 4-6 6-10 6C5 24 0 19 0 13z" fill="#1273c4" />
          <path d="M9.500 8.300C6 13 9 20 15 20.200c3 0 5-.8 7-2.200-3 5-9 7-13 4.500-5-3-4.500-10.500.5-14.200z" fill="#0c59a4" />
        </svg>
      </Task>
      <Task width="w-[49px]" running>
        <svg viewBox="0 0 24 24" className="h-[24px] w-[24px]"><rect x="1" y="1" width="20" height="19" rx="3" fill="#7289da" /><path d="M6 7c3-1.500 7-1.500 10 0 1.500 2.500 2 5 1.800 7.500-1.300.9-2.300 1.300-3.200 1.500l-1-1.500H8.400L7.400 16c-1-.2-2-.6-3.200-1.500C4 12 4.500 9.500 6 7z" fill="#fff" /><circle cx="8.800" cy="11.500" r="1.300" fill="#7289da" /><circle cx="13.200" cy="11.500" r="1.300" fill="#7289da" /><circle cx="17" cy="17.500" r="6.500" fill="#ed5a57" /><circle cx="17" cy="17.500" r="2.500" fill="#fff" /></svg>
      </Task>
      <Task width="w-[49px]" running>
        <ChromeLogo />
        <div className="absolute left-[23px] top-[18px] flex h-[15px] w-[15px] items-center justify-center rounded-full bg-[#8c7066] text-[9px] leading-none text-white">F</div>
      </Task>
      <Task width="w-[49px]" running><PaletteGlyph className="-mt-[2px] h-[24px] w-[24px]" /></Task>
      <Task width="w-[48px]" running active>
        <svg viewBox="0 0 24 24" className="h-[24px] w-[24px]">
          <path d="M19 3 22.500 19 18 22.500z" fill="#6f6654" />
          <path d="M10 2.500h9.500L17.500 20.500 1 16.500z" fill="#8cc6d6" />
          <path d="M10 2.500h9.500L18.700 9.500 5.500 9.500z" fill="#c4e6ee" />
          <path d="M19.500 2.500 17.500 20.500 10 18.700z" fill="#5e9fb0" />
          <path d="M1 16.500 17.500 20.500l.5 2L2.500 19z" fill="#f1f1ec" />
          <path d="M10 1.800h9.500" stroke="#555" strokeDasharray="1 1" strokeWidth="1.800" />
        </svg>
      </Task>
      <div className="flex-1" />
      <div className="flex items-center text-white">
        <svg viewBox="0 0 12 8" className="h-[8px] w-[12px]" fill="none" stroke="currentColor" strokeWidth="1.200"><path d="M.5 7 6 1.500 11.500 7" /></svg>
        <svg viewBox="0 0 12 16" className="ml-[13px] h-[16px] w-[12px]" fill="none" stroke="currentColor" strokeWidth="1.200"><path d="M1 4.500h7v7H1zM8 7l3-2v6L8 9M2 2c2-1.500 5-1.500 7 0M2 14c2 1.500 5 1.500 7 0" /></svg>
        <svg viewBox="0 0 16 14" className="ml-[10px] h-[14px] w-[16px]" fill="none" stroke="currentColor" strokeWidth="1.200"><path d="M4.500 4.500H14v7H4.500V9M14.500 6.500h1v3h-1" /><path d="M6 6h6.500v4H6z" fill="#fff" /><path d="M1 1v2h3.500V1M2.800 3v5h2" /></svg>
        <svg viewBox="0 0 18 16" className="ml-[7px] h-[16px] w-[18px]"><path d="M2 13c-2-2-1-5 1.500-5C4 4 9 3 11 6c3-.5 4 2 3.500 3.500C17 10 16.500 13 15 13z" fill="#8a8a8a" /><path d="M2 1 16.500 14.500" stroke="#ddd" strokeWidth="1.200" /></svg>
        <svg viewBox="0 0 14 14" className="ml-[10px] h-[14px] w-[13px]" fill="none" stroke="currentColor" strokeWidth="1.100"><path d="M1 13C1 6 6 1.500 13 1.500M4 13c0-5 4-8.500 9-8.500M7 13c0-3.500 2.500-5.500 6-5.500" /><circle cx="11.500" cy="12" r="1.500" fill="#fff" stroke="none" /></svg>
        <svg viewBox="0 0 18 14" className="ml-[8px] h-[14px] w-[17px]" fill="none" stroke="currentColor" strokeWidth="1.200"><path d="M1 5h2.500L7 2v10L3.500 9H1zM9.500 5c1 1.200 1 2.800 0 4M12 3c2 2.300 2 5.700 0 8M14.500 1c3 3.500 3 8.500 0 12" /></svg>
        <FaDropbox className="ml-[7px] h-[16px] w-[16px]" />
        <span className="ml-[10px] w-[37px] text-[12px] tracking-[-0.4px]">ENG</span>
        <div className="w-[48px] whitespace-nowrap text-center text-[12px] leading-[18px] tracking-[-0.6px]">
          <div>10:19 PM</div>
          <div>26/1/21</div>
        </div>
        <div className="relative ml-[18px] h-[30px] w-[36px]">
          <svg viewBox="0 0 16 16" className="mt-[5px] h-[16px] w-[16px]"><path d="M0 0h16v13h-5v3l-4-3H0z" fill="#fff" /><path d="M3 3.500h10M3 6.500h10M3 9.500h7" stroke="#222" strokeWidth="1.300" /></svg>
          <div className="absolute left-[5px] top-[13px] flex h-[18px] w-[20px] items-center justify-center rounded-full border border-[#888] bg-[#3a3f45] text-[10.500px] font-semibold leading-none">22</div>
        </div>
        <div className="mr-[4px] h-[40px] w-px bg-[#7b7f86]" />
      </div>
    </div>
  );
}

export default function App() {
  return (
    <div className={`relative h-[1080px] w-[1920px] overflow-hidden bg-white ${UI}`}>
      <Chrome />
      <CoursePage />
      <Paint />
      <Notepad />
      <Taskbar />
    </div>
  );
}
